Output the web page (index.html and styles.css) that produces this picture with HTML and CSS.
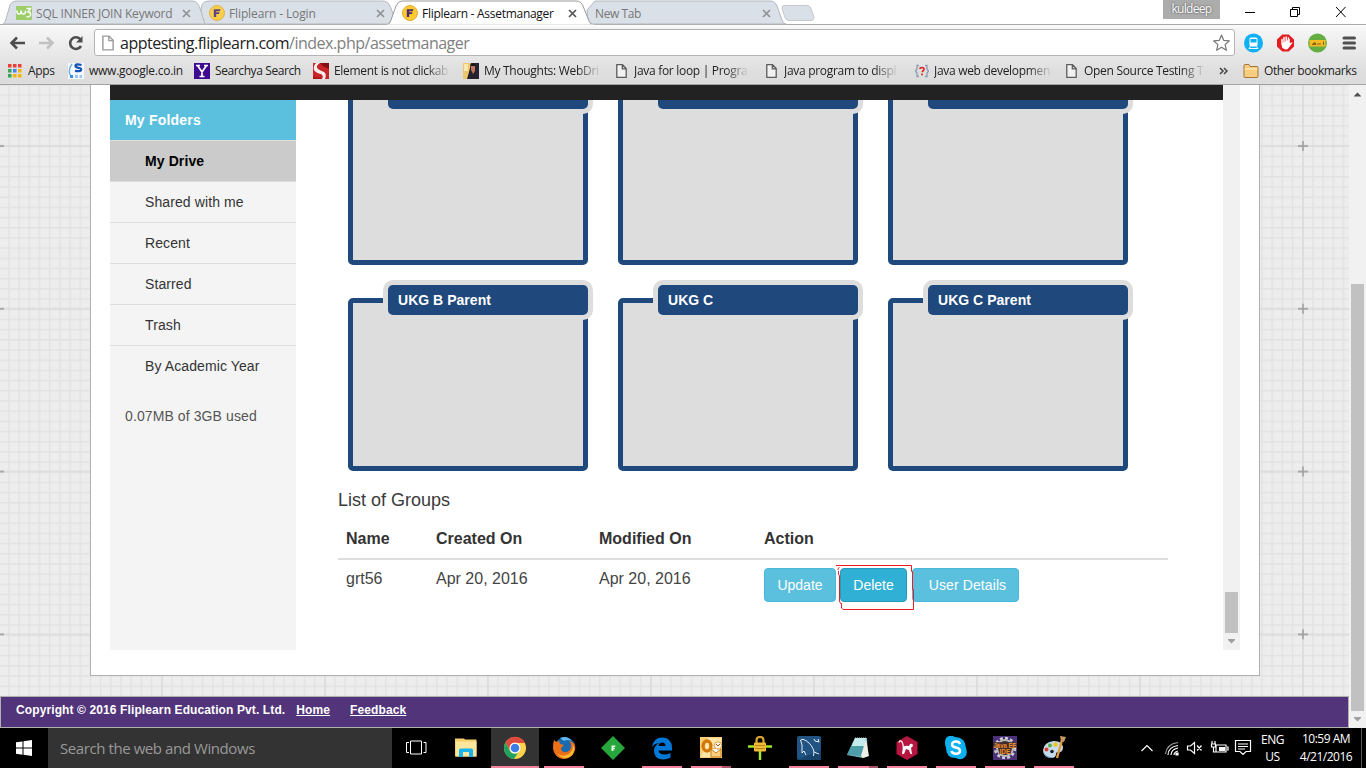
FILE: index.html
```html
<!DOCTYPE html>
<html lang="en">
<head>
<meta charset="utf-8">
<title>Fliplearn - Assetmanager</title>
<link rel="stylesheet" href="styles.css">
</head>
<body>
<svg class="defs" width="0" height="0">
  <defs>
    <symbol id="x" viewBox="0 0 9 9"><path d="M1 1 8 8M8 1 1 8" fill="none" stroke="currentColor" stroke-width="1.7"/></symbol>
    <symbol id="flip" viewBox="0 0 16 16"><circle cx="8" cy="8" r="7.5" fill="#ffcb2e" stroke="#e0ab3c"/><path d="M4.800 4.200h6.700l-.8 2H7.200v1h3.400l-.6 1.700H7.200V12H4.800z" fill="#4a2a70"/></symbol>
    <symbol id="page" viewBox="0 0 11 14"><path d="M.8.7h5.7l3.7 3.8v8.8H.8zM6.3.8v4h3.8" fill="#fff" fill-opacity=".6" stroke="currentColor" stroke-width="1.3"/></symbol>
  </defs>
</svg>
<header class="browser">
  <div class="tabs">
    <svg class="tabs-bg" width="1366" height="26" viewBox="0 0 1366 26">
      <path d="M0 24.5H1366" stroke="#a9a9a9"/>
      <path d="M588 24 587 10 595 1h175q5 0 7 5l5 14q1 4 4 4z" fill="#dae0e8" stroke="#b4b8be"/>
      <path d="M3 24q2-1 3-5L10 5q2-4 6-4h176q5 0 7 5l5 13q2 5 4 5z" fill="#dae0e8" stroke="#b4b8be"/>
      <path d="M205 24q-3-8-4-14 0-9 8-9h173q6 0 8 5l4 10-5 8z" fill="#dae0e8" stroke="#b4b8be"/>
      <path d="M387 25q3-1 4-5l5-14q2-5 6-5h174q5 0 7 5l6 15q1 3 4 4z" fill="#fff" stroke="#999"/>
      <path d="M387 25.5H594" stroke="#fff" stroke-width="2"/>
      <path d="M784 5.5h23q3 0 4 3l3 9q0 3-3 3h-22q-3 0-4-3l-3-9q0-3 2-3z" fill="#dae0e8" stroke="#c5c8cc"/>
    </svg>
    <div class="tab t1"><svg class="i16" viewBox="0 0 16 16"><rect width="16" height="14" y="1" rx="1" fill="#93cc54"/><path d="M.8 5.500q0 3.500 2.200 3.500t2.200-3.500q0 3.500 2.200 3.500t2.200-3.500M10.500 3.500h4L12 7q2.600 0 2.600 2.500 0 2.500-4.200 2.200" fill="none" stroke="#fff" stroke-width="1.500"/></svg><span>SQL INNER JOIN Keyword</span><svg class="x"><use href="#x"/></svg></div>
    <div class="tab t2"><svg class="i16 dim"><use href="#flip"/></svg><span>Fliplearn - Login</span><svg class="x"><use href="#x"/></svg></div>
    <div class="tab t3"><svg class="i16"><use href="#flip"/></svg><span>Fliplearn - Assetmanager</span><svg class="x"><use href="#x"/></svg></div>
    <div class="tab t4"><span>New Tab</span><svg class="x"><use href="#x"/></svg></div>
    <div class="winctl"><span class="user">kuldeep</span>
      <svg width="103" height="16" viewBox="0 0 103 16" fill="none" stroke="#000"><path d="M0 8.500h10M45.500 5.500h7v7h-7zM47.500 5.500v-2h7v7h-2M91 3l9.500 10M100.500 3 91 13"/></svg></div>
  </div>
  <div class="toolbar">
    <svg class="nav" width="80" height="20" viewBox="0 0 80 20" fill="none" stroke-width="2.600"><path d="M18 10H5M10 4.500 4.500 10 10 15.500" stroke="#4d4d4d"/><path d="M32 10h13M40 4.500l5.500 5.500-5.500 5.500" stroke="#c1c1c1"/><path d="M73.500 6.500A5.800 5.800 0 1 0 74 13" stroke="#4d4d4d"/><path d="M75.500 3v6.500H69z" fill="#4d4d4d" stroke="none"/></svg>
    <div class="omni"><svg class="pg" width="12" height="15"><use href="#page"/></svg><span class="url">apptesting.fliplearn.com<i>/index.php/assetmanager</i></span>
      <svg class="star" width="19" height="18" viewBox="0 0 19 18"><path d="m9.500 1 2.200 5.300 5.700.5-4.300 3.800 1.300 5.700-4.900-3-4.900 3 1.300-5.700L1.600 6.800l5.700-.5z" fill="#fff" stroke="#777" stroke-width="1.200" stroke-linejoin="round"/></svg></div>
    <svg class="ext" width="116" height="20" viewBox="0 0 116 20">
      <circle cx="10.500" cy="10" r="9.500" fill="#0fb0f5"/><rect x="6.500" y="4.500" width="8" height="9" rx="1.500" fill="#fff"/><path d="M7.500 6h6v3.500h-6z" fill="#0fb0f5"/><path d="m7.500 13.500-1.500 2h9l-1.500-2M8 11.500h1.500m2 0H13" stroke="#fff" fill="none"/>
      <path d="M39.300 1.500h6.400L51 6.600v6.800L45.700 18.500h-6.400L34 13.400V6.600z" fill="#e51c20"/><path d="M39 10.500V6.500m0 4 1 4q3 2.500 5 0l3-4-2 .5V6.500M41 10V4.500m2.200 5.500V4m0 0m2.200 6V5" stroke="#fff" stroke-width="1.500" stroke-linecap="round" fill="#fff"/>
      <circle cx="74.500" cy="10" r="9.500" fill="#64ad42"/><path d="M66.500 7h16v6.500h-16z" fill="#f5ba24"/><path d="M69 11.500h4l-1-2zm5-.5h4M80.500 8.500v3.500" stroke="#876812" fill="#876812"/>
      <path d="M101 5h10.500M101 10h10.500M101 15h10.500" stroke="#505050" stroke-width="3" stroke-linecap="round"/>
    </svg>
  </div>
  <nav class="marks">
    <a class="m0"><svg class="apps" width="14" height="14" viewBox="0 0 14 14"><path d="M0 0h3.500v3.500H0zM5 0h3.500v3.500H5zM10 0h3.500v3.500H10z" fill="#ea4038"/><path d="M0 5h3.500v3.500H0z" fill="#38a555"/><path d="M5 5h3.500v3.500H5z" fill="#4285f4"/><path d="M10 5h3.500v3.500H10zM5 10h3.500v3.500H5zM10 10h3.500v3.500H10z" fill="#f5b50a"/><path d="M0 10h3.500v3.500H0z" fill="#38a555"/></svg><span>Apps</span></a>
    <a class="m1"><svg class="i16" viewBox="0 0 16 16"><path fill="#f5f9ff" d="M0 0h16v16H0z"/><path d="M4 1Q0 6 2 12" fill="none" stroke="#6fb0ec" stroke-width="1.500"/><path d="M13.500 2q-6-1.500-6 1 0 1.300 3 1.800 3.300.5 2.500 2.500-1 1.500-6 .5" fill="none" stroke="#1553b5" stroke-width="2.300"/><path d="M2 12h3v3H2z" fill="#388ee0"/><path d="M7 12h3v3H7zM11.500 12h2.500v3h-2.500z" fill="#9bc9f2"/></svg><span>www.google.co.in</span></a>
    <a class="m2"><svg class="i16" viewBox="0 0 16 16"><path fill="#3d0a91" d="M0 0h16v16H0z"/><path d="M3.500 2.500 8 9l4.500-6.500M8 8v6M2 2.500h4m4 0h4M5.500 13.500h5" fill="none" stroke="#fff" stroke-width="1.700"/></svg><span>Searchya Search</span></a>
    <a class="m3"><svg class="i16" viewBox="0 0 16 16"><path fill="#c92428" d="M0 0h16v16H0z"/><path d="M7 0h9v6Q9 3 8 1z" fill="#850f12"/><path d="M7 0Q2 3 5 6q2 1.500 6 3 3 2 1 7H9q2-3-1-5-5-1-7-4-1-4 2-7z" fill="#f3f0ee"/><path d="M0 13q4 3 8 1v2H0z" fill="#a91518"/></svg><span class="fade">Element is not clickab</span></a>
    <a class="m4"><svg class="i16" viewBox="0 0 16 16"><path fill="#24222f" d="M0 0h16v16H0z"/><path fill="#edc66e" d="M0 0h8L7 5l-1 4-2 7H0z"/><path fill="#fbe8ae" d="M1 1h4v7H1z"/><path d="M8 3h4v5l-2 3-2-4z" fill="#bd7657"/><path d="M7 2q3-3 6 1H8z" fill="#15121b"/></svg><span class="fade">My Thoughts: WebDri</span></a>
    <a class="m5"><svg class="pg"><use href="#page"/></svg><span class="fade">Java for loop | Progra</span></a>
    <a class="m6"><svg class="pg"><use href="#page"/></svg><span class="fade">Java program to displ</span></a>
    <a class="m7"><svg class="i14" viewBox="0 0 14 14"><path d="M4 1.500H2V5L.5 7 2 9v3.500h2M10 1.500h2V5l1.500 2L12 9v3.500h-2" fill="none" stroke="#8c9bb0" stroke-width="1.300"/><path d="M5 5Q5 3.500 7 3.500T9 5.200Q9 6 7 8M7 9.500v1.800" fill="none" stroke="#df2020" stroke-width="1.700"/></svg><span class="fade">Java web developmen</span></a>
    <a class="m8"><svg class="pg"><use href="#page"/></svg><span class="fade">Open Source Testing T</span></a>
    <svg class="more" width="9" height="8" viewBox="0 0 9 8"><path d="m1 1 3 3-3 3m4-6 3 3-3 3" fill="none" stroke="#444" stroke-width="1.500"/></svg>
    <a class="m9"><svg width="16" height="14" viewBox="0 0 16 14"><path d="M1 12.500v-11q0-1 1-1h4l1 2h7q1 0 1 1v9q0 1-1 1H2q-1 0-1-1z" fill="#f8cd7f" stroke="#a57638"/><path d="M1.500 5h13" stroke="#fff0c6"/></svg><span>Other bookmarks</span></a>
  </nav>
</header>

<div class="viewport">
  <div class="site">
    <svg class="grid-bg" width="1349" height="612">
      <defs>
        <pattern id="cell" x="-2" y="60.500" width="10.1875" height="10.1875" patternUnits="userSpaceOnUse"><path d="M0 .6H10.2M.6 0V10.200" stroke="#e2e2e2" stroke-width="1.600"/></pattern>
        <pattern id="major" x="-83" y="-21" width="163" height="162.800" patternUnits="userSpaceOnUse"><path d="M82 0v163M0 82h163" stroke="#dcdcdc" stroke-width="1.500"/><path d="M82 77v10M77 82h10" stroke="#a0a0a0" stroke-width="1.600"/></pattern>
      </defs>
      <rect width="1349" height="612" fill="url(#cell)"/><rect width="1349" height="612" fill="url(#major)"/>
    </svg>
    <main class="sheet">
      <div class="app">
        <div class="pane">
          <div class="darkbar"></div>
          <div class="cols">
            <aside class="side">
              <h2>My Folders</h2>
              <ul><li class="on">My Drive</li><li>Shared with me</li><li>Recent</li><li>Starred</li><li>Trash</li><li>By Academic Year</li></ul>
              <p>0.07MB of 3GB used</p>
            </aside>
            <section class="content">
              <div class="cards">
                <div class="card"><b></b></div><div class="card"><b></b></div><div class="card"><b></b></div>
                <div class="card"><b>UKG B Parent</b></div><div class="card"><b>UKG C</b></div><div class="card"><b>UKG C Parent</b></div>
              </div>
              <h3>List of Groups</h3>
              <div class="row head"><span>Name</span><span>Created On</span><span>Modified On</span><span>Action</span></div>
              <div class="row"><span>grt56</span><span>Apr 20, 2016</span><span>Apr 20, 2016</span>
                <div class="btns"><button class="b1">Update</button><button class="b2">Delete</button><button class="b3">User Details</button>
                  <svg class="pen" width="80" height="46" viewBox="0 0 80 46"><path d="M0 .5H75.500V6.500H76.500V24.500H77.500V44.500H7L5.500 43V38.500H4.500L3.500 36V11L2.500 9V6M2 5V3.500L3.500 2.500" fill="none" stroke="#ed1c24"/></svg>
                </div></div>
            </section>
          </div>
        </div>
        <div class="sb inner"><div class="thumb"></div><svg width="9" height="5" viewBox="0 0 9 5"><path d="M1 0h7v1L4.500 4.500 1 1z" fill="#a0a0a0"/></svg></div>
      </div>
    </main>
    <footer class="foot"><span>Copyright © 2016 Fliplearn Education Pvt. Ltd.</span><a class="home">Home</a><a class="fb">Feedback</a></footer>
  </div>
  <div class="sb outer"><svg width="9" height="5" viewBox="0 0 9 5"><path d="M1 4.500V4L4.500.5 8 4v.5z" fill="#505050"/></svg><div class="thumb"></div><svg width="9" height="5" viewBox="0 0 9 5"><path d="M1 0h7v1L4.500 4.500 1 1z" fill="#a0a0a0"/></svg></div>
</div>

<div class="taskbar">
  <div class="start"><svg width="16" height="16" viewBox="0 0 16 16" fill="#fff"><path d="M0 2.300 6.500 1.400V7.500H0zM7.500 1.200 16 0v7.500H7.500zM0 8.500h6.500v6.200L0 13.800zM7.500 8.500H16V16l-8.500-1.200z"/></svg></div>
  <div class="search">Search the web and Windows</div>
  <div class="tv"><svg width="21" height="15" viewBox="0 0 21 15" fill="none" stroke="#fff"><path d="M4.500 1h11v13h-11zM3 2.500H.5v10H3M17.500 2.500H20v10h-2.500"/></svg></div>
  <div class="apps-row">
    <div><svg viewBox="0 0 24 24"><path d="M1 2.500h9l1 1h11.500v17H1z" fill="#f6cf6b"/><path d="M2 5.500h20.500v15H2z" fill="#fde59b"/><path d="M5 21v-7q0-1.500 1.500-1.500h11Q19 12.500 19 14v7h-4v-5H9v5z" fill="#18b4ef"/></svg></div>
    <div class="cur run"><svg viewBox="0 0 24 24"><circle cx="12" cy="12" r="11" fill="#ffd24b"/><path d="M2.500 6.500a11 11 0 0 1 19.500.500H12a6 6 0 0 0-5 8z" fill="#dd4b3e"/><path d="M2.400 6.600A11 11 0 0 0 11 23l5-8a5 5 0 0 1-9 0z" fill="#1da25f"/><circle cx="12" cy="12" r="5.500" fill="#fff"/><circle cx="12" cy="12" r="4.300" fill="#3c7ee8"/></svg></div>
    <div class="run"><svg viewBox="0 0 24 24"><circle cx="13" cy="11" r="9.800" fill="#1b6ab0"/><path d="M8 2q7-3 12 3-5-2-8 0z" fill="#5fb9ea"/><path d="M2 4q2 3 5 1l1 3 4 1-3 3q0 5 6 4 5-2 4-8l-2-3q4 1 5 4l-1-4q3 4 2 9-3 9-12 9Q3 22 1 13q0-6 1-9z" fill="#ed7018"/><path d="M20 6q3 7-3 12-7 4-12-1 4 6 10 5 7-2 7.500-9z" fill="#fbb92d"/></svg></div>
    <div><svg viewBox="0 0 24 24"><path d="m12 0 12 12-12 12L0 12z" fill="#26a63b"/><path d="M10.500 9.500h4l-.5 1.700h-1.500v.8H14l-.4 1.200h-1.100V15h-2z" fill="#e9ffe9"/></svg></div>
    <div class="run"><svg viewBox="0 0 24 24"><path d="M2 11Q3.500 1.500 12.500 1.500 22 2 22 12v2.500H8.500q.5 4 6 4 3 0 6-1.500v4.500q-4 2-8 2Q4 23 4 14.500 4 10 9 7q-5 .5-7 4zM8.500 10h7q0-3.500-3.300-3.500T8.500 10z" fill="#0078d7"/></svg></div>
    <div class="run two"><svg viewBox="0 0 24 24"><path d="M1 1h22v21H1z" fill="#f9ce74"/><path d="M2 21 9 2h13v19z" fill="#fff1bd" opacity=".7"/><ellipse cx="8" cy="10" rx="3.900" ry="5" fill="none" stroke="#d17608" stroke-width="3.300"/><path d="M12 13h10v8H12z" fill="#f8cf83" stroke="#c97e19"/><path d="m12 13 5 4 5-4" stroke="#c97e19" fill="#fff"/><circle cx="19" cy="9.500" r="3.700" fill="#fff7e4" stroke="#d99a48"/><path d="m17 8 2 2 2-2" stroke="#995e14" fill="none"/></svg></div>
    <div><svg viewBox="0 0 24 24"><path d="M0 10.500h24M12 14v10" stroke="#a1e52c" stroke-width="2.500"/><path d="M8.500 8V4.500Q8.500 1 12 1t3.500 3.500V8" fill="none" stroke="#d9a329" stroke-width="2.200"/><rect x="6" y="6.500" width="12" height="9" rx="1" fill="#eebc38"/><path d="M7 9.500h10M7 12.500h10" stroke="#b88416"/></svg></div>
    <div class="run"><svg viewBox="0 0 24 24"><rect width="24" height="24" rx="2" fill="#215482"/><path d="m0 24 24-10v10z" fill="#17436d"/><path d="M3.500 4q2-2 6 1 6 4 7.500 11l5 2M3.500 4l1.500 5v8l2-2 2 4M17 3l1 2 4 1-1-3M17 16l-.500 4" fill="none" stroke="#e3edf2"/></svg></div>
    <div class="run two"><svg viewBox="0 0 24 24"><path d="M9 2h12l1 18-5 2-16-3z" fill="#7fb5ba"/><path d="M9 2h11l-2 9H5z" fill="#c2ecee"/><path d="M5 10h13l-3 10-14-1z" fill="#4e9eaa"/><path d="m20 3 3 17-6 2-2-2z" fill="#efefe7"/><path d="M9 2h12" stroke="#caced0" stroke-dasharray="1 1"/></svg></div>
    <div class="run"><svg viewBox="0 0 24 24"><path d="m12 0 10.500 6v12L12 24 1.500 18V6z" fill="#b6163f"/><path d="M8 17Q9 9 7 6 5 3.500 4 6.500" fill="none" stroke="#fff" stroke-width="1.300"/><path d="M8 11q2-2 6-1l1-2q3-1 3 2l-2 2 1 6h-1.500L14 14l-3-1-2 5H7l1-4z" fill="#fff"/></svg></div>
    <div class="run"><svg viewBox="0 0 24 24"><path d="M2 2q4-4 9-1 10 0 11 11 2 6-1 9-4 4-9 1Q2 22 2 12 0 6 2 2z" fill="#0fb0ee"/><path d="M16 8q-1-3-4.500-2.500Q8 6 8 8.500q0 2.300 4 3 4 .8 4 3.300 0 3-4 3T7.500 15" fill="none" stroke="#fff" stroke-width="2.500"/></svg></div>
    <div class="run"><svg viewBox="0 0 24 24"><path fill="#4b3178" d="M0 0h24v24H0z"/><circle cx="12" cy="12" r="8" fill="#3b302f" stroke="#bbb" stroke-width="2"/><circle cx="12" cy="12" r="10" fill="none" stroke="#ccc" stroke-width="2.500" stroke-dasharray="3 2.200"/><path d="M0 6h24v6H0zM6 12h12v6H6z" fill="#432e2c" opacity=".8"/><text x=".5" y="11.500" class="ee" textLength="23" lengthAdjust="spacingAndGlyphs">Java EE</text><text x="6.500" y="17.500" class="ee" textLength="11" lengthAdjust="spacingAndGlyphs">IDE</text></svg></div>
    <div class="run"><svg viewBox="0 0 24 24"><path d="M12 5q8 0 9 6 0 6-5 5-2 0-2 2 0 4-5 4-8-1-8-8Q2 6 12 5z" fill="#c5dcec"/><path d="M1.500 16q1 6 8 6l2-1q-7 1-10-5z" fill="#6998be"/><circle cx="4.500" cy="13.500" r="2" fill="#dc3c30"/><circle cx="8" cy="9.500" r="2" fill="#5da843"/><circle cx="13.500" cy="8.500" r="2.200" fill="#f0c11b"/><circle cx="10" cy="15.500" r="1.800" fill="#17212a"/><path d="m20 4-5 18" stroke="#e39b3f" stroke-width="2.400"/><path d="m18 0 6 1-2 5-3-1z" fill="#c79a62"/></svg></div>
  </div>
  <div class="tray">
    <svg width="112" height="18" viewBox="0 0 112 18" fill="none" stroke="#fff" stroke-width="1.200">
      <path d="m1.500 12 5.500-5.500 5.500 5.500"/>
      <path d="M28 16q0-8 10-9.500M31 16q0-5.500 7-7M34 16q0-3 4-4"/><path d="M25.500 15q1-10 12.500-11.500" stroke="#999"/><path d="M36 14h2v2h-2z" fill="#fff"/>
      <path d="M47.500 7h3l4-3.500v11L50.500 11h-3zM57 6.500l4.500 5M61.500 6.500 57 11.500"/>
      <path d="M76 6h10v7H76zM87 8h1v3h-1M72 2v3m3-3v3m-3.500 0h4v3h-4zM73.500 8v5H76"/><path d="M79 8h6v4h-6z" fill="#fff" stroke="none"/>
      <path d="M95.500 1.500h15v11H106l-3 3-3-3h-4.500zM98 5h10M98 7.500h10M98 10h7"/>
    </svg>
    <div class="lang">ENG<br>US</div>
    <div class="clock"><span class="time">10:59 AM</span><span class="date">4/21/2016</span></div>
    <div class="peek"></div>
  </div>
</div>
</body>
</html>
```
FILE: styles.css
```css
* { box-sizing: border-box; }
body { margin: 0; width: 1366px; height: 768px; overflow: hidden; display: flex; flex-direction: column; font-family: "Liberation Sans", Arial, sans-serif; background: #fff; }
svg { display: block; flex: none; }
.defs { position: absolute; }
.i16 { width: 16px; height: 16px; }
.i14 { width: 14px; height: 14px; }
.pg { width: 11px; height: 14px; color: #5c5c5c; }

.browser { height: 85px; flex: none; font-family: "Open Sans", "Noto Sans", sans-serif; border-bottom: 1px solid #a3a3a3; background: linear-gradient(#fff 24px, #f6f6f6 28px, #dedede 72px, #dcdcdc); }
.tabs { height: 25px; display: flex; position: relative; background: #fff; font-size: 12px; color: #777; }
.tabs-bg { position: absolute; left: 0; top: 0; }
.tab { position: relative; display: flex; align-items: center; height: 26px; white-space: nowrap; }
.tab span { flex: 1; margin-left: 4px; }
.tab .i16 { opacity: .85; }
.x { width: 9px; height: 9px; color: #8e9297; }
.t1 { width: 175px; margin-left: 16px; letter-spacing: -.2px; }
.t2 { width: 176px; margin-left: 18px; letter-spacing: -.12px; }
.t3 { width: 175px; margin-left: 17px; color: #111; letter-spacing: -.28px; }
.t3 .i16 { opacity: 1; }
.t3 .x { color: #555; }
.t4 { width: 176px; margin-left: 18px; letter-spacing: -.4px; }
.t4 span { margin-left: 0; }
.winctl { display: flex; margin-left: 392px; gap: 25px; position: relative; }
.user { width: 57px; height: 19px; background: #acacac; color: #fff; text-align: center; line-height: 18px; text-shadow: 0 0 2px #333; letter-spacing: -.7px; }
.winctl svg { margin-top: 4px; }

.toolbar { height: 35px; display: flex; align-items: center; }
.nav { margin-left: 7px; }
.omni { margin-left: 7px; width: 1141px; height: 27px; border: 1px solid #b4b4b4; border-radius: 3px; background: #fff; display: flex; align-items: center; }
.omni .pg { width: 12px; height: 16px; margin-left: 7px; color: #9a9a9a; }
.url { flex: 1; margin-left: 6px; font-size: 16px; line-height: 24px; letter-spacing: -.5px; color: #222; white-space: nowrap; }
.url i { font-style: normal; color: #808080; }
.star { margin-right: 3px; }
.ext { margin-left: 8px; }

.marks { height: 21px; display: flex; align-items: center; font-size: 12px; color: #222; padding-left: 8px; white-space: nowrap; }
.marks a { display: flex; align-items: center; gap: 5px; flex: none; letter-spacing: -.3px; }
.fade { -webkit-mask-image: linear-gradient(90deg, #000 calc(100% - 22px), rgba(0,0,0,.1)); mask-image: linear-gradient(90deg, #000 calc(100% - 22px), rgba(0,0,0,.1)); }
.m0 { width: 60px; }
.m0 span { margin-left: 1px; }
.m1 { width: 126px; }
.marks .m1 { letter-spacing: -.25px; }
.m2 { width: 119px; }
.marks .m2 { letter-spacing: -.4px; }
.m3 { width: 150px; }
.m4 { width: 153px; }
.m5 { width: 150px; }
.m6 { width: 149px; }
.m7 { width: 151px; }
.m8 { width: 134px; }
.marks .m5, .marks .m6, .marks .m8 { gap: 7px; }
.more { margin-left: 19px; }
.marks .m9 { margin-left: 15px; letter-spacing: -.4px; }

.viewport { height: 643px; flex: none; display: flex; }
.site { width: 1349px; position: relative; background: #ededed; display: flex; flex-direction: column; overflow: hidden; }
.grid-bg { position: absolute; left: 0; top: 0; }
.sheet { position: relative; margin-left: 90px; width: 1170px; height: 591px; background: #fff; border: 1px solid #b0b0b0; border-top: 0; padding-left: 19px; }
.app { display: flex; height: 565px; width: 1130px; }
.pane { width: 1113px; }
.darkbar { height: 15px; background: #222; }
.cols { display: flex; height: 550px; }
.side { width: 186px; background: #f4f4f4; font-size: 14px; color: #333; }
.side h2 { margin: 0; height: 40px; line-height: 40px; padding-left: 15px; font-size: 14px; color: #fff; background: #5bc0de; letter-spacing: .2px; }
.side ul { list-style: none; margin: 0; padding: 0; }
.side li { height: 41px; line-height: 40px; border-top: 1px solid #ddd; padding-left: 35px; letter-spacing: .1px; }
.side .on { background: #cbcbcb; color: #000; font-weight: bold; }
.side p { margin: 20px 0 0 15px; line-height: 20px; color: #555; letter-spacing: .1px; }
.content { margin-left: 42px; width: 830px; color: #3a3a3a; }
.cards { height: 372px; overflow: hidden; padding-left: 10px; display: grid; grid-template-columns: repeat(3, 240px); grid-auto-rows: 173px; column-gap: 30px; row-gap: 33px; align-content: start; }
.cards .card { margin-top: -8px; margin-bottom: 8px; }
.card { border: 5px solid #1f497d; border-radius: 5px; background: #ddd; }
.card b { display: block; margin: -18px -5px 0 35px; height: 30px; line-height: 30px; padding-left: 10px; background: #1f497d; border-radius: 5px; box-shadow: 0 0 0 5px #ddd; color: #fff; font-size: 14px; letter-spacing: .03px; }
.content h3 { margin: 17px 0 0; font-weight: normal; font-size: 18px; line-height: 22px; }
.row { display: grid; grid-template-columns: 90px 163px 165px 1fr; padding-left: 8px; font-size: 16px; line-height: 23px; padding-top: 8px; color: #444; }
.row > span { margin-top: -1px; }
.head { height: 49px; padding-top: 17px; font-weight: bold; border-bottom: 2px solid #ddd; color: #333; }
.row > span { white-space: nowrap; }
.btns { display: flex; position: relative; }
.btns button { height: 34px; margin: 0; padding: 0; border: 1px solid #46b8da; border-radius: 4px; background: #5bc0de; color: #fff; font: 14px "Liberation Sans", Arial, sans-serif; }
.b1 { width: 72px; }
.btns .b2 { width: 67px; margin-left: 4px; background: #31b0d5; border-color: #269abc; }
.btns .b3 { width: 107px; margin-left: 5px; padding-left: 4px; letter-spacing: .1px; }
.pen { position: absolute; left: 72px; top: -3px; }
.sb { width: 17px; background: #f1f1f1; display: flex; flex-direction: column; align-items: center; }
.sb .thumb { width: 13px; background: #c1c1c1; }
.inner .thumb { height: 41px; margin: 507px 0 6px; }
.outer { padding-top: 7px; }
.outer .thumb { height: 427px; margin: 187px 0 6px; }
.foot { position: relative; margin-top: 20px; height: 32px; border: 1px solid #b0b0b0; background: #52347a; color: #fff; font-size: 12px; font-weight: bold; line-height: 26px; padding-left: 15px; display: flex; white-space: nowrap; letter-spacing: .11px; }
.foot a { text-decoration: underline; }
.home { margin-left: 11px; }
.fb { margin-left: 20px; }

.taskbar { height: 40px; background: #000; display: flex; color: #fff; font-family: "Open Sans", "Noto Sans", sans-serif; }
.start { width: 48px; display: flex; align-items: center; justify-content: center; }
.search { width: 344px; background: #333; color: #999; font-size: 15px; line-height: 41px; padding-left: 12px; letter-spacing: -.42px; }
.tv { width: 49px; padding: 12px 0 0 14px; }
.apps-row { display: flex; }
.apps-row div { width: 49px; height: 40px; padding: 8px 0 0 13px; position: relative; }
.apps-row svg { width: 24px; height: 24px; }
.run::after { content: ""; position: absolute; left: 5px; bottom: 0; width: 40px; height: 2px; background: #f7839f; }
.two::after { background: linear-gradient(90deg, #f7839f 31px, #a9566c 31px); }
.apps-row .cur { background: linear-gradient(#333, #333) 1px 0 no-repeat; }
.cur::after { left: 1px; width: 48px; }
.ee { font: bold 6.5px "Liberation Sans", sans-serif; fill: #f28c28; }
.tray { display: flex; margin-left: 62px; font-size: 12px; }
.tray svg { margin-top: 11px; }
.lang { width: 40px; text-align: center; line-height: 17px; padding: 3px 0 0 1px; letter-spacing: -.4px; }
.clock { width: 62px; margin-left: 3px; display: flex; flex-direction: column; align-items: center; line-height: 17px; padding-top: 3px; letter-spacing: -.5px; white-space: nowrap; }
.time { margin-top: -1px; margin-bottom: 1px; }
.peek { width: 1px; background: #555; margin-left: 4px; }
```
